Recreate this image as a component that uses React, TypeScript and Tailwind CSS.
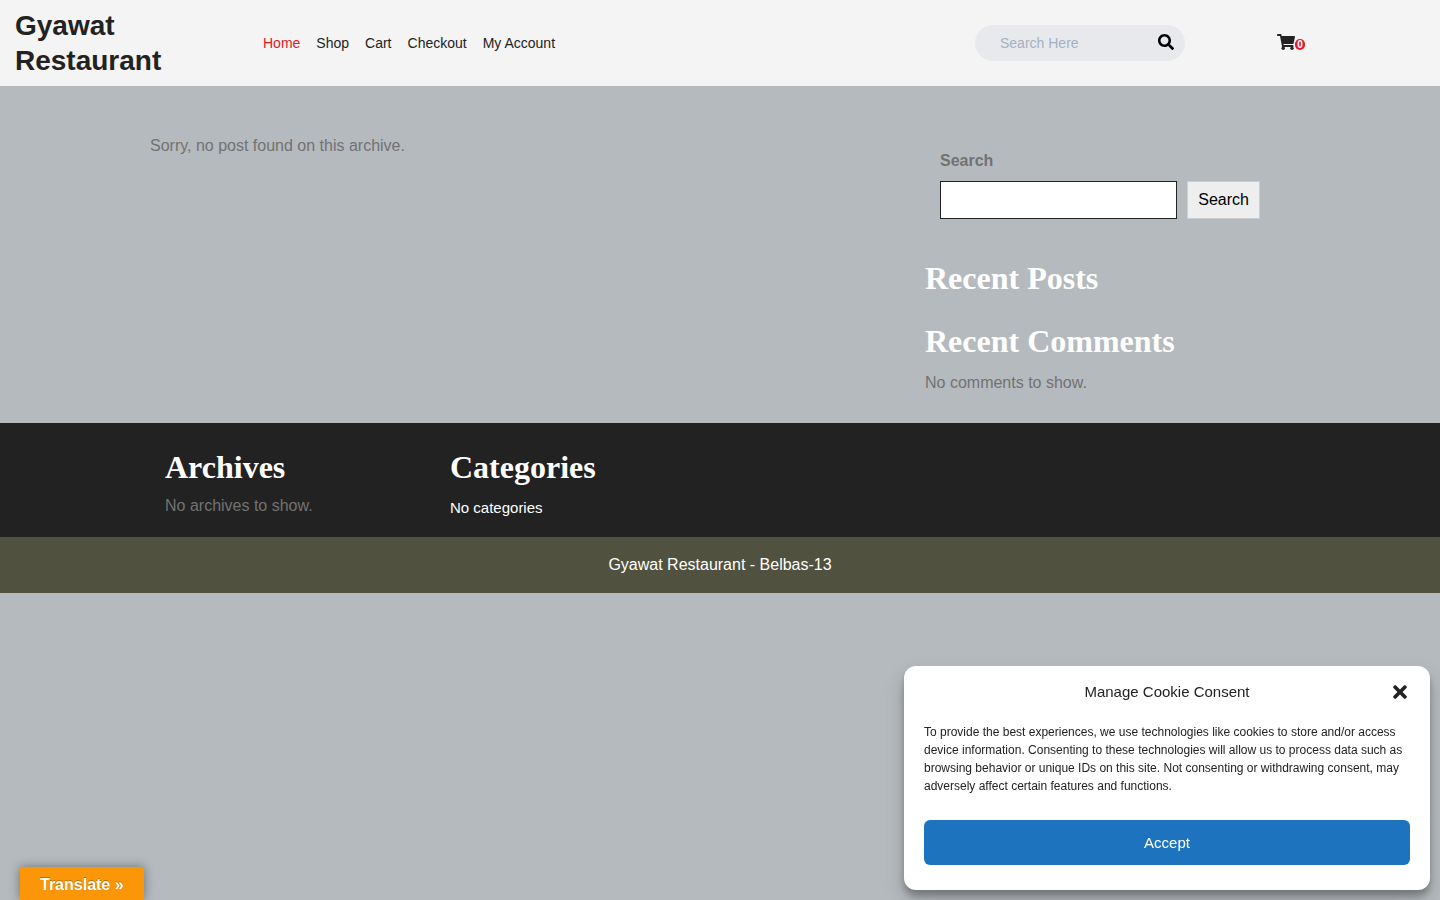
import { FaSearch, FaTimes } from "react-icons/fa";

const links = ["Home", "Shop", "Cart", "Checkout", "My Account"];

function CartIcon() {
  return (
    <svg viewBox="0 0 18 16" className="mb-0.5 h-4 w-[18px]" fill="currentColor" aria-hidden="true">
      <path d="M.7 0h2.9c.4 0 .7.2.8.6L4.7 2h12.5c.5 0 .9.5.8 1l-1.5 6.5c-.1.4-.4.6-.8.6H6.4l.2 1h9.1c.5 0 .9.5.8 1l-.2.9H5.1L3 2H.7C.3 2 0 1.700 0 1.300V.7C0 .3.3 0 .7 0Z" />
      <circle cx="6.200" cy="14.300" r="1.700" />
      <circle cx="15" cy="14.300" r="1.700" />
    </svg>
  );
}

function Heading({ children }: { children: string }) {
  return (
    <h2 className="font-['Liberation_Serif',serif] text-[32px] leading-[38px] font-bold text-white">
      {children}
    </h2>
  );
}

function Header() {
  return (
    <header className="grid grid-cols-12 items-center bg-[#f4f4f4] py-2 text-[#222222]">
      <p className="col-span-2 px-[15px] text-[28px] leading-[35px] font-bold">
        <a href="#home">Gyawat Restaurant</a>
      </p>
      <nav className="col-span-6 px-[15px]" aria-label="Main">
        <ul className="flex text-sm">
          {links.map((link, i) => (
            <li key={link}>
              <a href="#home" className={i === 0 ? "px-2 text-[#dd1a2b]" : "px-2"}>
                {link}
              </a>
            </li>
          ))}
        </ul>
      </nav>
      <div className="col-span-2 px-[15px]">
        <form role="search" className="flex h-9 items-center rounded-full bg-[#e8e9ed] pr-[11px] pl-[25px]">
          <input
            type="search"
            aria-label="Search Here"
            placeholder="Search Here"
            className="min-w-0 flex-1 bg-transparent text-sm outline-none placeholder:text-[#a3b1bf]"
          />
          <button type="button" aria-label="Search" className="pb-0.5 text-base text-black">
            <FaSearch />
          </button>
        </form>
      </div>
      <div className="col-span-2 flex justify-center pr-[58px]">
        <a href="#cart" aria-label="Cart" className="flex items-center text-base">
          <CartIcon />
          <span className="mt-0.5 rounded-full bg-[#dd1a2b] px-0.5 text-[10px] leading-[11px] font-bold text-white">
            0
          </span>
        </a>
      </div>
    </header>
  );
}

function Main() {
  return (
    <main className="mx-auto grid max-w-[1140px] grid-cols-3 pt-12 pb-7">
      <p className="col-span-2">Sorry, no post found on this archive.</p>
      <aside className="px-[15px]">
        <form className="p-[15px]">
          <label htmlFor="sidebar-search" className="block font-bold">
            Search
          </label>
          <div className="mt-2 flex gap-2.5">
            <input
              id="sidebar-search"
              type="search"
              className="h-[38px] min-w-0 flex-1 border border-[#222222] bg-white px-2 text-black outline-none"
            />
            <button type="button" className="border border-[#cccccc] bg-[#eeeeee] px-2.5 text-black">
              Search
            </button>
          </div>
        </form>
        <div className="mt-[25px] flex flex-col gap-[25px]">
          <Heading>Recent Posts</Heading>
          <div>
            <Heading>Recent Comments</Heading>
            <p className="mt-[11px]">No comments to show.</p>
          </div>
        </div>
      </aside>
    </main>
  );
}

function Footer() {
  return (
    <footer>
      <div className="bg-[#222222]">
        <div className="mx-auto grid max-w-[1140px] grid-cols-4 pt-[25px] pb-[17px]">
          <section className="px-[15px]">
            <Heading>Archives</Heading>
            <p className="mt-2">No archives to show.</p>
          </section>
          <section className="px-[15px]">
            <Heading>Categories</Heading>
            <ul className="mt-2.5">
              <li className="text-[15px] leading-6 text-white">No categories</li>
            </ul>
          </section>
        </div>
      </div>
      <p className="bg-[#50513e] py-4 text-center text-white">Gyawat Restaurant - Belbas-13</p>
    </footer>
  );
}

function CookieConsent() {
  return (
    <div
      role="dialog"
      aria-labelledby="cookie-title"
      className="fixed right-2.5 bottom-2.5 w-[526px] rounded-xl bg-white px-5 pt-[15px] pb-[25px] text-[#222222] shadow-[0_10px_20px_rgba(0,0,0,0.19),0_6px_6px_rgba(0,0,0,0.23)]"
    >
      <div className="grid grid-cols-[20px_1fr_20px] items-center">
        <h2 id="cookie-title" className="col-start-2 text-center text-[15px] leading-[22px]">
          Manage Cookie Consent
        </h2>
        <button type="button" aria-label="Close" className="flex justify-center text-xl">
          <FaTimes />
        </button>
      </div>
      <p className="mt-5 text-xs leading-[18px]">
        To provide the best experiences, we use technologies like cookies to store and/or access device
        information. Consenting to these technologies will allow us to process data such as browsing
        behavior or unique IDs on this site. Not consenting or withdrawing consent, may adversely affect
        certain features and functions.
      </p>
      <button
        type="button"
        className="mt-[25px] h-[45px] w-full rounded-md bg-[#1e73be] pt-0.5 text-[15px] text-white"
      >
        Accept
      </button>
    </div>
  );
}

export default function App() {
  return (
    <div className="min-h-screen bg-[#b5babe] font-['Liberation_Sans',Arial,sans-serif] text-base text-[#727272]">
      <Header />
      <Main />
      <Footer />
      <button
        type="button"
        className="fixed bottom-0 left-5 h-[33px] bg-[#fb9608] px-5 pt-0.5 font-bold text-white shadow-[0_0_10px_rgba(0,0,0,0.4)] [text-shadow:0_-1px_0_rgba(0,0,0,0.25)]"
      >
        Translate »
      </button>
      <CookieConsent />
    </div>
  );
}
